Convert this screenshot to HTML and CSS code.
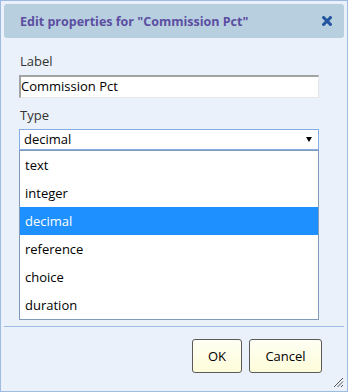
FILE: index.html
```html
<!DOCTYPE html>
<html lang="en">
<head>
    <meta charset="UTF-8">
    <title>Edit properties</title>
    <link rel="stylesheet" href="styles.css">
</head>
<body>
    <div class="dialog">
        <div class="titlebar">
            <span class="title">Edit properties for "Commission Pct"</span>
            <svg class="close" width="10" height="10" viewBox="0 0 10 10">
                <path d="M1.6 1.6 L8.4 8.4 M8.4 1.6 L1.6 8.4" stroke="#24569f" stroke-width="3" stroke-linecap="square"/>
            </svg>
        </div>
        <div class="content">
            <label class="field-label">Label</label>
            <div class="text-input">Commission Pct</div>
            <label class="field-label">Type</label>
            <div class="select">
                <span>decimal</span>
                <svg class="arrow" width="6" height="5" viewBox="0 0 6 5"><path d="M0 0 H6 L3 5 Z" fill="#000"/></svg>
                <ul class="options">
                    <li>text</li>
                    <li>integer</li>
                    <li class="selected">decimal</li>
                    <li>reference</li>
                    <li>choice</li>
                    <li>duration</li>
                </ul>
            </div>
        </div>
        <div class="footer">
            <button class="btn ok">OK</button>
            <button class="btn">Cancel</button>
        </div>
        <svg class="grip" width="11" height="11" viewBox="0 0 11 11">
            <path d="M1 10 L10 1 M4.5 10 L10 4.5 M8 10 L10 8" stroke="#555" stroke-width="1"/>
        </svg>
    </div>
</body>
</html>
```

FILE: styles.css
```css
body {
    margin: 0;
    font-family: 'Open Sans', sans-serif;
    font-size: 13px;
    color: #222;
}
.dialog {
    position: relative;
    width: 348px;
    height: 392px;
    box-sizing: border-box;
    border: 1px solid #9ebbe3;
    background: #eaf1fa;
    padding: 3px;
    display: flex;
    flex-direction: column;
}
.titlebar {
    height: 34px;
    flex: none;
    border-radius: 3px;
    background: #b8cfe0;
    display: flex;
    align-items: center;
    justify-content: space-between;
    padding: 0 12px 0 16px;
}
.title {
    font-weight: bold;
    font-size: 12.5px;
    color: #5b4ea0;
}
.close {
    display: block;
}
.content {
    flex: 1;
    padding: 14px 25px 0 15px;
}
.field-label {
    display: block;
    line-height: 19px;
    padding-left: 1px;
    color: #333;
    margin-bottom: 4px;
}
.text-input {
    height: 23px;
    box-sizing: border-box;
    background: #fff;
    border-top: 2px solid #a3a3a3;
    border-left: 2px solid #a3a3a3;
    border-right: 1px solid #e6e6e6;
    border-bottom: 1px solid #e6e6e6;
    line-height: 19px;
    padding-left: 0;
    color: #000;
    margin-bottom: 8px;
}
.select {
    position: relative;
    height: 21px;
    box-sizing: border-box;
    background: #fff;
    border: 1px solid #86ade6;
    line-height: 19px;
    padding-left: 4px;
    color: #000;
}
.arrow {
    position: absolute;
    right: 6px;
    top: 7px;
}
.options {
    position: absolute;
    left: -1px;
    right: -1px;
    top: 20px;
    margin: 0;
    padding: 0;
    list-style: none;
    background: #fff;
    border: 1px solid #7f9abb;
}
.options li {
    height: 28px;
    line-height: 28px;
    padding-left: 5px;
    color: #000;
}
.options li.selected {
    background: #1e90ff;
    color: #fff;
}
.footer {
    flex: none;
    height: 62px;
    box-sizing: border-box;
    border-top: 1px solid #9ebbe3;
    display: flex;
    justify-content: flex-end;
    align-items: flex-start;
    gap: 7px;
    padding: 12px 22px 0 0;
}
.btn {
    height: 34px;
    width: 73px;
    box-sizing: border-box;
    border: 1px solid #5a5a5a;
    border-radius: 3px;
    background: linear-gradient(#fffff4, #fdfcd9);
    font-family: 'Open Sans', sans-serif;
    font-size: 13px;
    color: #000;
    padding: 0;
}
.btn.ok {
    width: 50px;
}
.grip {
    position: absolute;
    right: 3px;
    bottom: 3px;
}
```
